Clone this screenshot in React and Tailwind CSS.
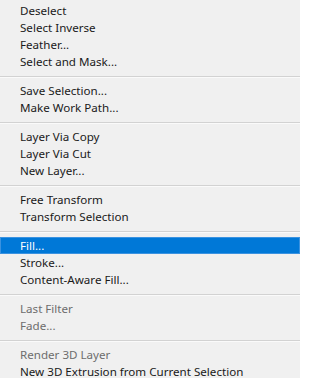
import React from 'react'

const groups = [
  [{ label: 'Deselect' }, { label: 'Select Inverse' }, { label: 'Feather...' }, { label: 'Select and Mask...' }],
  [{ label: 'Save Selection...' }, { label: 'Make Work Path...' }],
  [{ label: 'Layer Via Copy' }, { label: 'Layer Via Cut' }, { label: 'New Layer...' }],
  [{ label: 'Free Transform' }, { label: 'Transform Selection' }],
  [{ label: 'Fill...', active: true }, { label: 'Stroke...' }, { label: 'Content-Aware Fill...' }],
  [{ label: 'Last Filter', disabled: true }, { label: 'Fade...', disabled: true }],
  [{ label: 'Render 3D Layer', disabled: true }, { label: 'New 3D Extrusion from Current Selection' }],
]

function MenuItem({ item }) {
  if (item.active) {
    return (
      <div className="h-[17px] flex items-center pl-[19px] bg-[#0078d7] border border-[#3a92e0] text-white">
        {item.label}
      </div>
    )
  }
  return (
    <div className={`h-[17px] flex items-center pl-5 ${item.disabled ? 'text-[#6d6d6d]' : 'text-[#1a1a1a]'}`}>
      {item.label}
    </div>
  )
}

function Separator() {
  return (
    <div className="pt-[6px] pb-[4px]">
      <div className="h-px bg-[#d2d2d2]" />
      <div className="h-px bg-[#fafafa]" />
    </div>
  )
}

export default function App() {
  return (
    <div className="w-[300px] h-[378px] overflow-hidden bg-[#f0f0f0] pt-[2px] text-[11.6px] leading-none font-['Segoe_UI','Noto_Sans',sans-serif]">
      {groups.map((group, gi) => (
        <div key={gi}>
          {gi > 0 && <Separator />}
          {group.map((item) => <MenuItem key={item.label} item={item} />)}
        </div>
      ))}
    </div>
  )
}
